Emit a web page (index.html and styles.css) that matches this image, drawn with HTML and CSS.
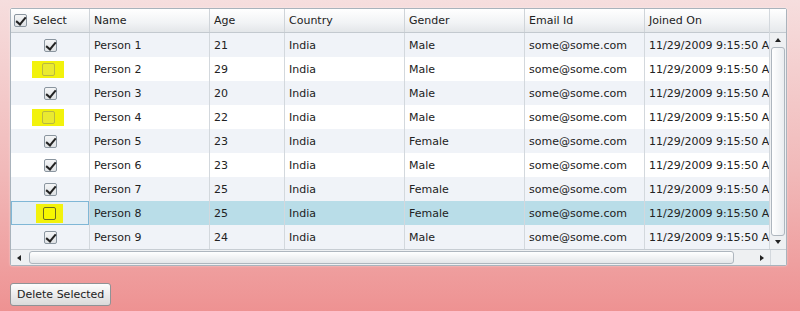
FILE: index.html
```html
<!DOCTYPE html>
<html lang="en">
<head>
  <meta charset="UTF-8" />
  <title>Delete Selected Rows</title>
  <link rel="stylesheet" href="styles.css">
</head>
<body>

  <div class="grid">
    <div class="grid-main">
      <div class="grid-table">
        <div class="row head">
          <div class="cell sel-head"><span class="chk on"></span>Select</div>
          <div class="cell">Name</div>
          <div class="cell">Age</div>
          <div class="cell">Country</div>
          <div class="cell">Gender</div>
          <div class="cell">Email Id</div>
          <div class="cell">Joined On</div>
        </div>

        <div class="row alt">
          <div class="cell sel"><span class="chk on"></span></div>
          <div class="cell">Person 1</div><div class="cell">21</div><div class="cell">India</div>
          <div class="cell">Male</div><div class="cell">some@some.com</div><div class="cell">11/29/2009 9:15:50 AM</div>
        </div>
        <div class="row">
          <div class="cell sel"><span class="mark"><span class="chk"></span></span></div>
          <div class="cell">Person 2</div><div class="cell">29</div><div class="cell">India</div>
          <div class="cell">Male</div><div class="cell">some@some.com</div><div class="cell">11/29/2009 9:15:50 AM</div>
        </div>
        <div class="row alt">
          <div class="cell sel"><span class="chk on"></span></div>
          <div class="cell">Person 3</div><div class="cell">20</div><div class="cell">India</div>
          <div class="cell">Male</div><div class="cell">some@some.com</div><div class="cell">11/29/2009 9:15:50 AM</div>
        </div>
        <div class="row">
          <div class="cell sel"><span class="mark"><span class="chk"></span></span></div>
          <div class="cell">Person 4</div><div class="cell">22</div><div class="cell">India</div>
          <div class="cell">Male</div><div class="cell">some@some.com</div><div class="cell">11/29/2009 9:15:50 AM</div>
        </div>
        <div class="row alt">
          <div class="cell sel"><span class="chk on"></span></div>
          <div class="cell">Person 5</div><div class="cell">23</div><div class="cell">India</div>
          <div class="cell">Female</div><div class="cell">some@some.com</div><div class="cell">11/29/2009 9:15:50 AM</div>
        </div>
        <div class="row">
          <div class="cell sel"><span class="chk on"></span></div>
          <div class="cell">Person 6</div><div class="cell">23</div><div class="cell">India</div>
          <div class="cell">Male</div><div class="cell">some@some.com</div><div class="cell">11/29/2009 9:15:50 AM</div>
        </div>
        <div class="row alt">
          <div class="cell sel"><span class="chk on"></span></div>
          <div class="cell">Person 7</div><div class="cell">25</div><div class="cell">India</div>
          <div class="cell">Female</div><div class="cell">some@some.com</div><div class="cell">11/29/2009 9:15:50 AM</div>
        </div>
        <div class="row picked">
          <div class="cell sel focus"><span class="mark small"><span class="chk"></span></span></div>
          <div class="cell">Person 8</div><div class="cell">25</div><div class="cell">India</div>
          <div class="cell">Female</div><div class="cell">some@some.com</div><div class="cell">11/29/2009 9:15:50 AM</div>
        </div>
        <div class="row alt">
          <div class="cell sel"><span class="chk on"></span></div>
          <div class="cell">Person 9</div><div class="cell">24</div><div class="cell">India</div>
          <div class="cell">Male</div><div class="cell">some@some.com</div><div class="cell">11/29/2009 9:15:50 AM</div>
        </div>
      </div>

      <!-- vertical scrollbar -->
      <div class="vcol">
        <div class="vhead"></div>
        <div class="vscroll">
          <span class="arr up"></span>
          <div class="vthumb"></div>
          <span class="arr down"></span>
        </div>
      </div>
    </div>

    <!-- horizontal scrollbar -->
    <div class="hrow">
      <div class="hscroll">
        <span class="arr left"></span>
        <div class="hthumb"></div>
        <span class="arr right"></span>
      </div>
      <div class="corner"></div>
    </div>
  </div>

  <button class="delete-btn">Delete Selected</button>

</body>
</html>
```

FILE: styles.css
```css
body {
  margin: 0;
  height: 311px;
  font-family: 'DejaVu Sans', Verdana, sans-serif;
  font-size: 11px;
  color: #222;
  background: linear-gradient(to bottom, #f6dede 0%, #f1b9b9 55%, #ee9292 100%);
  padding: 8px 0 0 10px;
  box-sizing: border-box;
  overflow: hidden;
}

.grid {
  width: 775px;
  border: 1px solid #a9b3bc;
  border-radius: 2px;
  background: #fff;
  box-shadow: 0 0 2px rgba(255, 255, 255, 0.6);
}

.grid-main {
  display: flex;
}

.grid-table {
  width: 759px;
  overflow: hidden;
}

.row {
  display: grid;
  grid-template-columns: 79px 120px 75px 120px 120px 120px 125px;
  height: 24px;
  background: #fff;
}

.row.alt {
  background: #f0f3f8;
}

.row.picked {
  background: #b9dde8;
}

.cell {
  display: flex;
  align-items: center;
  padding-left: 4px;
  border-right: 1px solid #d3d8dd;
  white-space: nowrap;
  overflow: hidden;
}

.row.head {
  background: linear-gradient(to bottom, #ffffff, #f1f3f5 60%, #e3e6e9);
  border-bottom: 1px solid #c3c9cf;
  height: 23px;
}

.row.head .cell {
  border-right: 1px solid #cfd4d9;
}

.sel-head {
  gap: 6px;
  padding-left: 3px;
}

.cell.sel {
  justify-content: center;
  padding-left: 0;
}

.cell.focus {
  background: #e3eef5;
  box-shadow: inset 0 0 0 1px #7fb7d6;
}

/* checkbox */
.chk {
  width: 11px;
  height: 11px;
  border: 1px solid #8a959f;
  border-radius: 2px;
  background: linear-gradient(to bottom, #f4f5f6, #dfe2e5);
  position: relative;
  flex: none;
}

.chk.on::after {
  content: "";
  position: absolute;
  left: 3px;
  top: 0;
  width: 4px;
  height: 8px;
  border: solid #222;
  border-width: 0 2px 2px 0;
  transform: rotate(40deg);
}

.mark {
  display: inline-flex;
  padding: 2px 9px 2px 10px;
  margin-left: -4px;
  background: #f2f20c;
}

.mark .chk {
  border-color: #b9b940;
  background: #eaea30;
}

.mark.small {
  padding: 3px 7px;
  margin-left: -2px;
}

.mark.small .chk {
  border-color: #6c6c20;
  background: #f7f700;
}

/* scrollbars */
.vcol {
  width: 16px;
  display: flex;
  flex-direction: column;
  border-left: 1px solid #d3d8dd;
}

.vhead {
  height: 23px;
  background: linear-gradient(to bottom, #ffffff, #e6e9ec);
  border-bottom: 1px solid #c3c9cf;
}

.vscroll {
  flex: 1;
  background: #eef0f2;
  display: flex;
  flex-direction: column;
  align-items: center;
  padding: 5px 0 5px;
}

.vthumb {
  width: 12px;
  flex: 1;
  margin: 5px 0 4px;
  border: 1px solid #aeb6be;
  border-radius: 3px;
  background: linear-gradient(to right, #ffffff, #eaedf0);
}

.hrow {
  display: flex;
  height: 15px;
  border-top: 1px solid #c7cdd3;
}

.hscroll {
  width: 759px;
  background: #eef0f2;
  display: flex;
  align-items: center;
  padding: 0 6px;
  box-sizing: border-box;
}

.hthumb {
  flex: none;
  width: 703px;
  height: 11px;
  margin: 0 auto 0 8px;
  border: 1px solid #aeb6be;
  border-radius: 3px;
  background: linear-gradient(to bottom, #ffffff, #e3e6e9);
}

.corner {
  flex: 1;
  background: #eef0f2;
  border-left: 1px solid #d3d8dd;
}

.arr {
  width: 0;
  height: 0;
  flex: none;
  border: 3px solid transparent;
}

.arr.up { border-bottom: 4px solid #222; border-top-width: 0; }
.arr.down { border-top: 4px solid #222; border-bottom-width: 0; }
.arr.left { border-right: 4px solid #222; border-left-width: 0; }
.arr.right { border-left: 4px solid #222; border-right-width: 0; }

.delete-btn {
  display: block;
  margin-top: 17px;
  padding: 2px 6px;
  height: 23px;
  white-space: nowrap;
  font-family: 'DejaVu Sans', Verdana, sans-serif;
  font-size: 11px;
  color: #222;
  border: 1px solid #8f9396;
  border-radius: 3px;
  background: linear-gradient(to bottom, #fdfdfd, #ececec 50%, #dadada);
}
```
